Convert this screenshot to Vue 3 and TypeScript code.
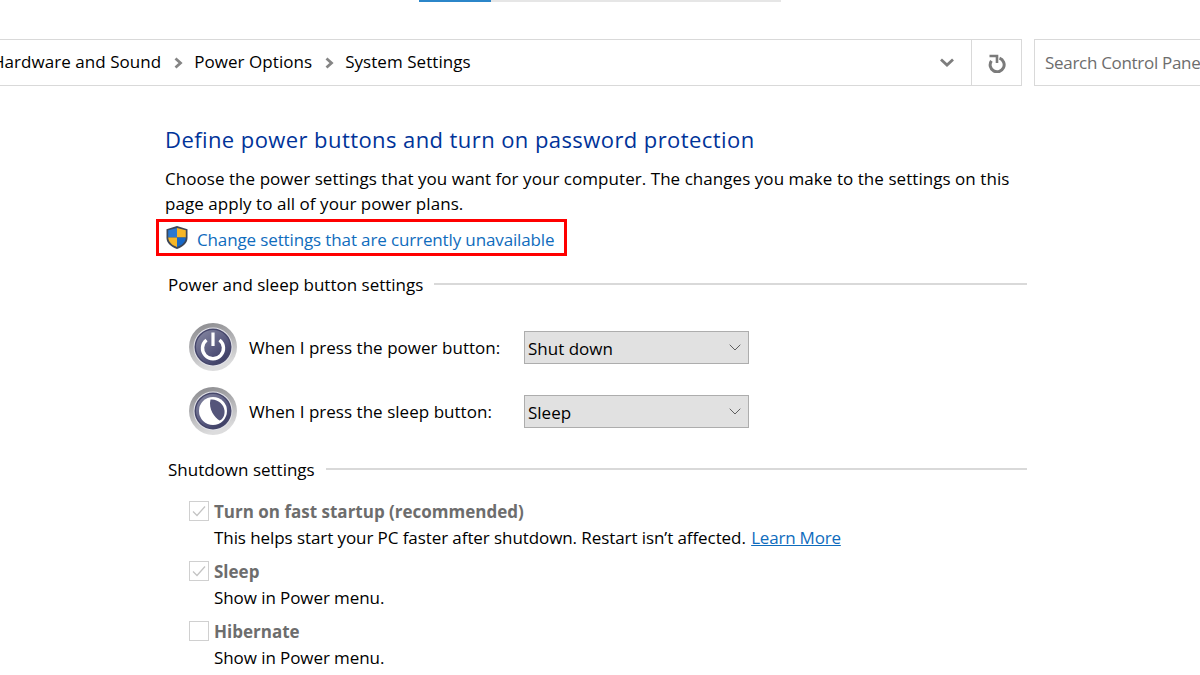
<script setup lang="ts">
const crumbs: string[] = ['Hardware and Sound', 'Power Options', 'System Settings']
const buttons = [
  { label: 'When I press the power button:', value: 'Shut down', kind: 'power' },
  { label: 'When I press the sleep button:', value: 'Sleep', kind: 'sleep' },
]
const options = [
  { title: 'Turn on fast startup (recommended)', checked: true, desc: 'This helps start your PC faster after shutdown. Restart isn’t affected. ', link: 'Learn More' },
  { title: 'Sleep', checked: true, desc: 'Show in Power menu.', link: '' },
  { title: 'Hibernate', checked: false, desc: 'Show in Power menu.', link: '' },
]
</script>

<template>
  <div class="page">
    <div class="scroll"><span class="thumb"></span><span class="track"></span></div>

    <div class="bar">
      <div class="address">
        <div class="crumbs">
          <template v-for="(c, i) in crumbs" :key="c">
            <span class="crumb">{{ c }}</span>
            <svg v-if="i < crumbs.length - 1" class="sep" width="9" height="12" viewBox="0 0 9 12"><path d="M1.500 1.500 6.500 6 1.500 10.500" fill="none" stroke="#858585" stroke-width="2.800"/></svg>
          </template>
        </div>
        <div class="drop">
          <svg width="14" height="9" viewBox="0 0 14 9"><path d="M1 1.500 7 7 13 1.500" fill="none" stroke="#7d7d7d" stroke-width="2.800"/></svg>
        </div>
        <div class="refresh">
          <svg width="18" height="20" viewBox="0 0 18 20"><path d="M11.500 5.200A7 7 0 1 1 3.400 7.800" fill="none" stroke="#7b7b7b" stroke-width="3"/><path d="M1.500 3H9V10" fill="none" stroke="#7b7b7b" stroke-width="2.600"/></svg>
        </div>
      </div>
      <div class="search">Search Control Panel</div>
    </div>

    <main class="content">
      <h1 class="title">Define power buttons and turn on password protection</h1>
      <p class="intro">Choose the power settings that you want for your computer. The changes you make to the settings on this page apply to all of your power plans.</p>
      <div class="highlight">
        <svg class="shield" width="24" height="25" viewBox="0 0 24 25">
          <path d="M12 1 22.500 4.200V13C22.500 18.500 17.500 22 12 24 6.500 22 1.500 18.500 1.500 13V4.200Z" fill="#3c4658"/>
          <path d="M12 3 12 12.500H3.200V5.200Z" fill="#2a78d0"/>
          <path d="M12 3 20.800 5.200V12.500H12Z" fill="#f6b626"/>
          <path d="M3.200 12.500H12V22C7.500 20.500 3.600 17.500 3.200 12.500Z" fill="#f6b626"/>
          <path d="M12 12.500H20.800C20.400 17.500 16.500 20.500 12 22Z" fill="#1668c8"/>
        </svg>
        <span class="change">Change settings that are currently unavailable</span>
      </div>

      <div class="legend legend-first"><span>Power and sleep button settings</span><i></i></div>

      <div class="rows">
        <div v-for="b in buttons" :key="b.kind" class="row">
          <svg class="orb" width="48" height="48" viewBox="0 0 48 48">
            <defs>
              <linearGradient id="rim" x1="0" y1="0" x2="0.300" y2="1"><stop offset="0" stop-color="#86868a"/><stop offset="1" stop-color="#dcdcdd"/></linearGradient>
              <linearGradient id="core" x1="0.100" y1="0" x2="0.900" y2="1"><stop offset="0" stop-color="#8486a0"/><stop offset="0.600" stop-color="#55567c"/><stop offset="1" stop-color="#37385e"/></linearGradient>
            </defs>
            <circle cx="24" cy="24" r="24" fill="url(#rim)"/>
            <circle cx="24" cy="24" r="19.500" fill="#e4e4ea"/>
            <circle cx="24" cy="24" r="18.500" fill="#45466a"/>
            <circle cx="24" cy="24" r="17" fill="url(#core)"/>
            <template v-if="b.kind === 'power'">
              <path d="M17.500 17A10.500 10.500 0 1 0 30.500 17" fill="none" stroke="#fff" stroke-width="3.400"/>
              <path d="M24 9.500V23" stroke="#fff" stroke-width="3.200"/>
            </template>
            <template v-else>
              <circle cx="24" cy="24" r="14" fill="#fff"/>
              <path d="M21.500 12.500C28 11.500 35 17 35.500 23.500 36 28 34 32.500 30.500 33.500 26 31 19 22 21.500 12.500Z" fill="#54557a"/>
            </template>
          </svg>
          <span class="row-label">{{ b.label }}</span>
          <div class="select">
            <span class="select-value">{{ b.value }}</span>
            <svg width="12" height="7" viewBox="0 0 12 7"><path d="M.7.7 6 6 11.300.7" fill="none" stroke="#5f5f5f" stroke-width="1"/></svg>
          </div>
        </div>
      </div>

      <div class="legend legend-second"><span>Shutdown settings</span><i></i></div>

      <div class="options">
        <div v-for="o in options" :key="o.title" class="option">
          <span class="box">
            <svg v-if="o.checked" width="18" height="18" viewBox="0 0 18 18"><path d="M3 9.500 7 13.500 15 4.500" fill="none" stroke="#c4c4c4" stroke-width="1.300"/></svg>
          </span>
          <div class="option-text">
            <div class="option-title">{{ o.title }}</div>
            <div class="option-desc">{{ o.desc }}<a v-if="o.link" class="learn">{{ o.link }}</a></div>
          </div>
        </div>
      </div>
    </main>
  </div>
</template>

<style>
html, body { margin: 0; background: #fff; overflow: hidden; }
</style>

<style scoped>
.page {
  width: 1200px;
  height: 675px;
  overflow: hidden;
  background: #fff;
  color: #000;
  font-family: "Open Sans", "Noto Sans", sans-serif;
  font-size: 17px;
}
.scroll { display: flex; height: 2px; padding-left: 419px; }
.thumb { width: 72px; background: #2b86c9; }
.track { width: 290px; background: #e6e6e6; }

.bar { display: flex; margin-top: 37px; height: 47px; }
.address {
  display: flex;
  width: 1022px;
  border: solid #d9d9d9;
  border-width: 1px 1px 1px 0;
  box-sizing: border-box;
  flex: none;
}
.crumbs { flex: 1; display: flex; align-items: center; margin-left: -8px; padding-bottom: 3px; }
.crumb { white-space: nowrap; letter-spacing: 0.05px; }
.sep { margin: 4px 11px 0 13px; }
.drop { width: 50px; display: flex; align-items: center; justify-content: center; border-right: 1px solid #d9d9d9; padding-left: 1px; box-sizing: border-box; }
.refresh { width: 49px; display: flex; align-items: center; justify-content: center; }
.search {
  margin-left: 12px;
  flex: none;
  width: 200px;
  box-sizing: border-box;
  border: solid #d9d9d9;
  border-width: 1px 0 1px 1px;
  display: flex;
  align-items: center;
  padding: 0 0 1px 10px;
  color: #6d6d6d;
  white-space: nowrap;
  letter-spacing: -0.3px;
}

.content { padding: 37px 0 0 165px; width: 862px; }
.title {
  margin: 0;
  font-size: 22px;
  line-height: 32px;
  font-weight: 400;
  color: #003399;
  white-space: nowrap;
  letter-spacing: 0.42px;
}
.intro { margin: 11px 0 0; width: 862px; line-height: 25px; letter-spacing: 0.05px; }
.highlight {
  margin: 3px 0 0 -9px;
  width: 411px;
  height: 37px;
  box-sizing: border-box;
  border: 3px solid #ff0000;
  display: flex;
  align-items: center;
  padding-left: 6px;
}
.shield { flex: none; }
.change { margin-left: 8px; color: #0f6cbd; white-space: nowrap; letter-spacing: -0.13px; padding-top: 4px; }

.legend { display: flex; align-items: center; padding-left: 3px; }
.legend span { white-space: nowrap; }
.legend i { flex: 1; height: 2px; background: #d9d9d9; margin-left: 11px; }
.legend-first { margin-top: 15px; height: 26px; }
.legend-second { margin-top: 21px; height: 26px; }

.rows { margin-top: 26px; padding-left: 24px; display: flex; flex-direction: column; gap: 16px; }
.row { display: flex; align-items: center; height: 48px; }
.orb { flex: none; }
.row-label { width: 275px; margin-left: 12px; letter-spacing: 0.03px; white-space: nowrap; flex: none; }
.select {
  width: 225px;
  height: 33px;
  box-sizing: border-box;
  background: #e1e1e1;
  border: 1px solid #adadad;
  display: flex;
  align-items: center;
  justify-content: space-between;
  padding: 0 7px 0 3px;
}
.select-value { padding-top: 2px; }

.options { margin-top: 16px; padding-left: 24px; display: flex; flex-direction: column; gap: 7px; }
.option { display: flex; }
.box {
  flex: none;
  width: 20px;
  height: 20px;
  box-sizing: border-box;
  border: 1px solid #d0d0d0;
  margin: 3px 5px 0 0;
  display: flex;
  align-items: center;
  justify-content: center;
}
.option-title { font-weight: 700; color: #6d6d6d; line-height: 27px; white-space: nowrap; }
.option-desc { line-height: 26px; white-space: nowrap; letter-spacing: -0.08px; }
.learn { color: #0f6cbd; text-decoration: underline; margin-left: 1px; letter-spacing: -0.2px; }
</style>
